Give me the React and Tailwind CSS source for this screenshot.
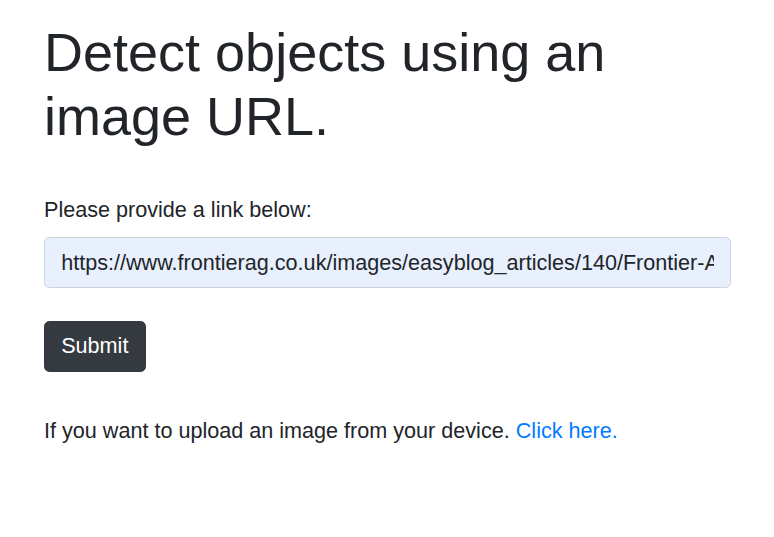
export default function App() {
  return (
    <div className="min-h-screen bg-white pl-[44px] pr-[43px] pt-[19.5px] text-[#212529] font-['Liberation_Sans',Arial,sans-serif]">
      {/* HEADER */}
      <h1 className="text-[54px] leading-[64.8px] font-normal">
        Detect objects using an image URL.
      </h1>

      {/* URL FORM */}
      <form className="mt-[44.7px]" onSubmit={(e) => e.preventDefault()}>
        <label className="block text-[21.6px] leading-[32.4px] mb-[10.8px]">
          Please provide a link below:
        </label>
        <input
          type="text"
          defaultValue="https://www.frontierag.co.uk/images/easyblog_articles/140/Frontier-Agriculture-tractor-field.jpg"
          className="block w-full h-[51.3px] px-[16.2px] text-[21.6px] bg-[#e8f0fe] border border-[#ced4da] rounded-[5.4px] text-[#212529] outline-none"
        />
        <button
          type="submit"
          className="mt-[32.7px] h-[51.3px] px-[16.2px] text-[21.6px] text-white bg-[#343a40] border border-[#343a40] rounded-[5.4px]"
        >
          Submit
        </button>
      </form>

      {/* UPLOAD LINK */}
      <p className="mt-[42.5px] text-[21.6px] leading-[32.4px]">
        If you want to upload an image from your device.{" "}
        <a href="#" className="text-[#007bff]">Click here.</a>
      </p>
    </div>
  );
}
